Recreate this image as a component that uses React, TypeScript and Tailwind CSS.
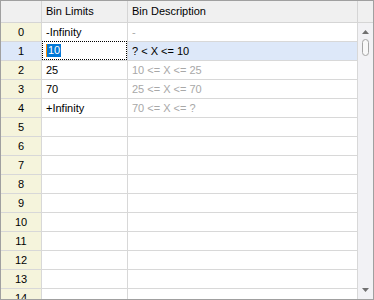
import React from 'react';

interface BinRow {
  limit: string;
  desc: string;
}

const ROWS: BinRow[] = [
  { limit: '-Infinity', desc: '-' },
  { limit: '10', desc: '? < X <= 10' },
  { limit: '25', desc: '10 <= X <= 25' },
  { limit: '70', desc: '25 <= X <= 70' },
  { limit: '+Infinity', desc: '70 <= X <= ?' },
];

const ROW_COUNT = 15;
const SELECTED = 1;

const ScrollBar = () => {
  return (
    <div className="w-[15px] flex flex-col bg-[#f2f2f5]">
      <div className="h-[22px] bg-[#f0f0f0] border-b border-[#d5d5d5]" />
      <div className="flex-1 flex flex-col items-center relative">
        <svg width="7" height="4" viewBox="0 0 7 4" className="mt-[7px]">
          <path d="M3.5 0 L7 4 L0 4 Z" fill="#707070" />
        </svg>
        <div className="mt-[5px] w-[7px] h-[17px] rounded-full border border-[#a5a5a5] bg-[#f8f8f8]" />
        <div className="flex-1" />
        <svg width="7" height="4" viewBox="0 0 7 4" className="mb-[7px]">
          <path d="M0 0 L7 0 L3.5 4 Z" fill="#707070" />
        </svg>
      </div>
    </div>
  );
};

const GridRow = ({ index }: { index: number }) => {
  const row = ROWS[index];
  const selected = index === SELECTED;
  return (
    <div className={`flex h-[19px] shrink-0 border-b border-[#d8d8d8] ${selected ? 'bg-[#dde8f9]' : 'bg-white'}`}>
      <div
        className={`w-[41px] shrink-0 border-r border-[#d8d8d8] flex items-center justify-center ${
          selected ? 'bg-[#dde8f9]' : 'bg-[#f5f4dc]'
        }`}
      >
        {index}
      </div>
      <div className="w-[86px] shrink-0 border-r border-[#d8d8d8] flex items-center">
        {selected ? (
          <div className="w-full h-[19px] -mt-px border border-dotted border-black bg-white flex items-center pl-[3px]">
            <span className="bg-[#0078d7] text-white border-l border-[#ff8c00] px-[1px] leading-[13px]">
              {row.limit}
            </span>
          </div>
        ) : (
          <span className="pl-[4px]">{row ? row.limit : ''}</span>
        )}
      </div>
      <div className="w-[230px] shrink-0 border-r border-[#d8d8d8] flex items-center pl-[4px]">
        <span className={selected ? 'text-black' : 'text-[#a8a8a8]'}>{row ? row.desc : ''}</span>
      </div>
    </div>
  );
};

const App = () => {
  return (
    <div
      className="w-[374px] h-[300px] border border-[#a0a0a0] bg-white flex overflow-hidden text-[11px] text-black"
      style={{ fontFamily: '"Liberation Sans", Arial, sans-serif' }}
    >
      <div className="w-[357px] shrink-0 flex flex-col overflow-hidden">
        <div className="flex h-[22px] shrink-0 bg-[#f0f0f0] border-b border-[#d5d5d5]">
          <div className="w-[41px] shrink-0 border-r border-[#d5d5d5]" />
          <div className="w-[86px] shrink-0 border-r border-[#d5d5d5] flex items-center pl-[4px]">Bin Limits</div>
          <div className="w-[230px] shrink-0 border-r border-[#d5d5d5] flex items-center pl-[4px]">Bin Description</div>
        </div>
        {Array.from({ length: ROW_COUNT }, (_, i) => (
          <GridRow key={i} index={i} />
        ))}
      </div>
      <ScrollBar />
    </div>
  );
};

export default App;
